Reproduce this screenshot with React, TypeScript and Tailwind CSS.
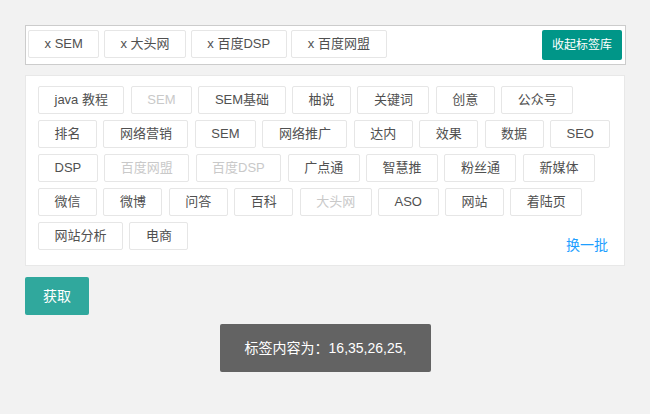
import React from 'react';

interface Tag {
  name: string;
  disabled?: boolean;
}

const SELECTED = ['SEM', '大头网', '百度DSP', '百度网盟'];

const TAGS: Tag[] = [
  { name: 'java 教程' },
  { name: 'SEM', disabled: true },
  { name: 'SEM基础' },
  { name: '柚说' },
  { name: '关键词' },
  { name: '创意' },
  { name: '公众号' },
  { name: '排名' },
  { name: '网络营销' },
  { name: 'SEM' },
  { name: '网络推广' },
  { name: '达内' },
  { name: '效果' },
  { name: '数据' },
  { name: 'SEO' },
  { name: 'DSP' },
  { name: '百度网盟', disabled: true },
  { name: '百度DSP', disabled: true },
  { name: '广点通' },
  { name: '智慧推' },
  { name: '粉丝通' },
  { name: '新媒体' },
  { name: '微信' },
  { name: '微博' },
  { name: '问答' },
  { name: '百科' },
  { name: '大头网', disabled: true },
  { name: 'ASO' },
  { name: '网站' },
  { name: '着陆页' },
  { name: '网站分析' },
  { name: '电商' },
];

export default function App() {
  return (
    <div className="min-h-[414px] bg-[#f2f2f2] pt-[25px] pl-[25px] font-['Liberation_Sans','Noto_Sans_CJK_SC',sans-serif]">
      {/* selected tags */}
      <div className="w-[601px] h-[40px] flex items-start justify-between bg-white border border-[#cccccc] pt-[4px] pl-[2px] pr-[3px]">
        <div className="flex gap-[4.7px]">
          {SELECTED.map((name) => (
            <span
              key={name}
              className="h-[28px] leading-[26px] px-[15.5px] border border-[#e6e6e6] rounded-[2px] text-[13px] text-[#505050] whitespace-nowrap"
            >
              x {name}
            </span>
          ))}
        </div>
        <button className="h-[30px] w-[80px] bg-[#009688] text-white text-[12px] rounded-[2px] leading-[30px]">
          收起标签库
        </button>
      </div>

      {/* tag library */}
      <div className="w-[600px] mt-[10px] bg-white border border-[#e8e8e8] pt-[10px] pl-[12px] pr-[8px] pb-[15px]">
        <div className="flex flex-wrap gap-x-[6.4px] gap-y-[6px]">
          {TAGS.map((tag, i) => (
            <span
              key={i}
              className={
                tag.disabled
                  ? 'h-[28px] leading-[26px] px-[15.5px] border border-[#e6e6e6] rounded-[2px] text-[13px] text-[#c9c9c9] bg-white whitespace-nowrap'
                  : 'h-[28px] leading-[26px] px-[15.5px] border border-[#e6e6e6] rounded-[2px] text-[13px] text-[#505050] bg-white whitespace-nowrap'
              }
            >
              {tag.name}
            </span>
          ))}
          <a className="ml-auto self-end mb-[-5px] mr-[8px] text-[14px] leading-[20px] text-[#1e9fff] cursor-pointer">
            换一批
          </a>
        </div>
      </div>

      <button className="mt-[11px] h-[38px] px-[18px] bg-[#30a89d] text-white text-[14px] rounded-[2px]">
        获取
      </button>

      <div className="w-[601px] flex justify-center mt-[9px]">
        <div className="bg-[#636363] text-white text-[14px] leading-[24px] px-[25px] py-[12px] rounded-[2px] whitespace-nowrap">
          标签内容为：16,35,26,25,
        </div>
      </div>
    </div>
  );
}
